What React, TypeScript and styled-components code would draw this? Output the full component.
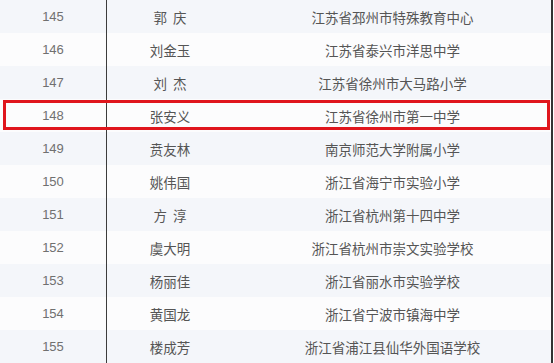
import styled, { createGlobalStyle } from 'styled-components'

type RowType = {
	no: number
	name: string
	school: string
}

const rows: RowType[] = [
	{ no: 145, name: '郭\u00a0\u00a0庆', school: '江苏省邳州市特殊教育中心' },
	{ no: 146, name: '刘金玉', school: '江苏省泰兴市洋思中学' },
	{ no: 147, name: '刘\u00a0\u00a0杰', school: '江苏省徐州市大马路小学' },
	{ no: 148, name: '张安义', school: '江苏省徐州市第一中学' },
	{ no: 149, name: '贲友林', school: '南京师范大学附属小学' },
	{ no: 150, name: '姚伟国', school: '浙江省海宁市实验小学' },
	{ no: 151, name: '方\u00a0\u00a0淳', school: '浙江省杭州第十四中学' },
	{ no: 152, name: '虞大明', school: '浙江省杭州市崇文实验学校' },
	{ no: 153, name: '杨丽佳', school: '浙江省丽水市实验学校' },
	{ no: 154, name: '黄国龙', school: '浙江省宁波市镇海中学' },
	{ no: 155, name: '楼成芳', school: '浙江省浦江县仙华外国语学校' },
]

const HIGHLIGHT = 148

export default function App() {
	return (
		<>
			<GlobalStyle />
			<Table>
				{rows.map((row, i) => (
					<Row key={row.no} striped={i % 2 === 0} marked={row.no === HIGHLIGHT}>
						<NumCell>{row.no}</NumCell>
						<NameCell>{row.name}</NameCell>
						<SchoolCell>{row.school}</SchoolCell>
					</Row>
				))}
			</Table>
		</>
	)
}

const GlobalStyle = createGlobalStyle`
	html, body {
		margin: 0;
		padding: 0;
		background: #ffffff;
	}
	body {
		font-family: "Liberation Sans", "Noto Sans CJK SC", sans-serif;
	}
`

const Table = styled.div`
	width: 551px;
	border-right: 2px solid #333333;
	display: flex;
	flex-direction: column;
`

const Row = styled.div<{ striped: boolean; marked: boolean }>`
	position: relative;
	height: 33px;
	display: grid;
	grid-template-columns: 107px 125px 1fr;
	background: ${(props) => (props.striped ? '#f4f6fa' : '#fcfcfd')};

	&::after {
		content: '';
		display: ${(props) => (props.marked ? 'block' : 'none')};
		position: absolute;
		top: 1px;
		left: 3px;
		right: 1px;
		bottom: 2px;
		border: 3px solid #e0161d;
		pointer-events: none;
	}
`

const Cell = styled.div`
	display: flex;
	align-items: center;
	justify-content: center;
	font-size: 13px;
	color: #555555;
	white-space: nowrap;
`

const NumCell = styled(Cell)`
	color: #707070;
	border-right: 1px solid #3c3c3c;
`

const NameCell = styled(Cell)`
	font-family: "Noto Sans CJK SC", sans-serif;
	font-size: 13.5px;
	padding-left: 1px;
`

const SchoolCell = styled(Cell)`
	font-family: "Noto Sans CJK SC", sans-serif;
	font-size: 13.5px;
	padding-left: 2px;
`
